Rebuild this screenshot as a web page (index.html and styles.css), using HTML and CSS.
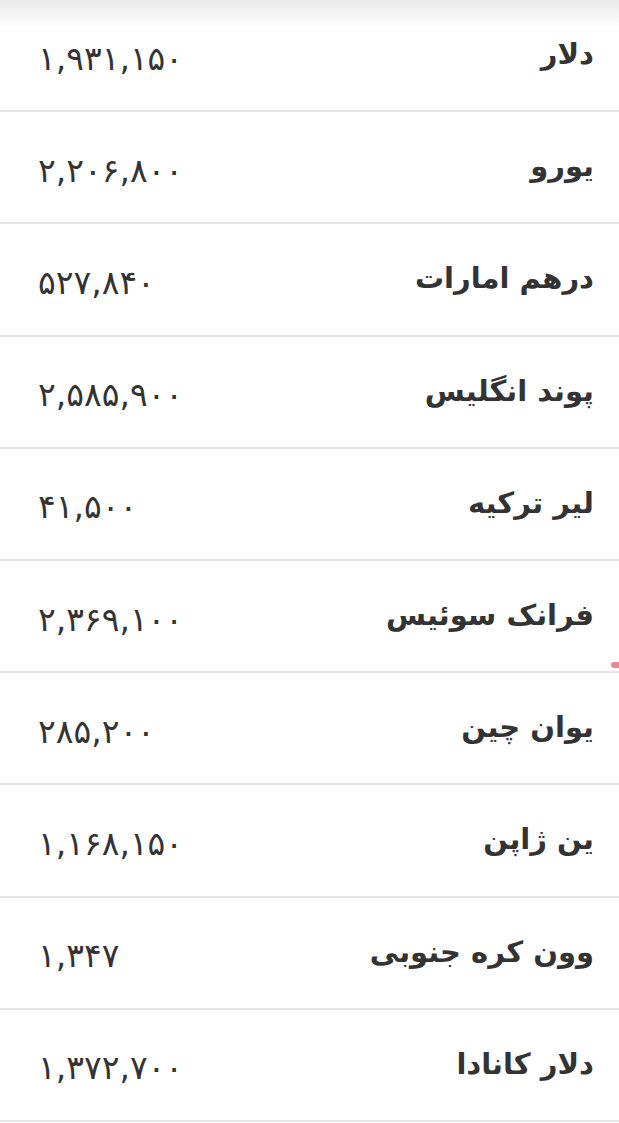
FILE: index.html
```html
<!DOCTYPE html>
<html lang="fa" dir="rtl">
<head>
    <meta charset="UTF-8">
    <meta name="viewport" content="width=device-width, initial-scale=1.0">
    <title>نرخ ارز</title>
    <link rel="stylesheet" href="styles.css">
</head>
<body>
    <div class="top-shadow"></div>
    <ul class="rates">
        <li class="rate"><span class="name">دلار</span><span class="price">۱,۹۳۱,۱۵۰</span></li>
        <li class="rate"><span class="name">یورو</span><span class="price">۲,۲۰۶,۸۰۰</span></li>
        <li class="rate"><span class="name">درهم امارات</span><span class="price">۵۲۷,۸۴۰</span></li>
        <li class="rate"><span class="name">پوند انگلیس</span><span class="price">۲,۵۸۵,۹۰۰</span></li>
        <li class="rate"><span class="name">لیر ترکیه</span><span class="price">۴۱,۵۰۰</span></li>
        <li class="rate"><span class="name">فرانک سوئیس</span><span class="price">۲,۳۶۹,۱۰۰</span></li>
        <li class="rate"><span class="name">یوان چین</span><span class="price">۲۸۵,۲۰۰</span></li>
        <li class="rate"><span class="name">ین ژاپن</span><span class="price">۱,۱۶۸,۱۵۰</span></li>
        <li class="rate"><span class="name">وون کره جنوبی</span><span class="price">۱,۳۴۷</span></li>
        <li class="rate"><span class="name">دلار کانادا</span><span class="price">۱,۳۷۲,۷۰۰</span></li>
    </ul>
    <div class="edge-mark"></div>
</body>
</html>
```

FILE: styles.css
```css
body {
    margin: 0;
    padding: 0;
    background: #ffffff;
    font-family: "DejaVu Sans", sans-serif;
    color: #333;
}
.top-shadow {
    position: fixed;
    top: 0;
    left: 0;
    right: 0;
    height: 28px;
    background: linear-gradient(to bottom, #e9e9e9, rgba(255, 255, 255, 0));
}
.rates {
    list-style: none;
    margin: 0;
    padding: 0;
}
.rate {
    display: flex;
    align-items: center;
    height: 110.2px;
    border-bottom: 2px solid #e6e6e6;
    padding: 0 25px 0 38px;
}
.name {
    font-size: 29px;
    font-weight: bold;
    padding-bottom: 2px;
}
.price {
    margin-right: auto;
    direction: ltr;
    font-size: 33px;
    padding-top: 6px;
}
.edge-mark {
    position: absolute;
    top: 662px;
    right: 0;
    width: 8px;
    height: 6px;
    background: #e88a8a;
    border-radius: 4px 0 0 4px;
}
```
